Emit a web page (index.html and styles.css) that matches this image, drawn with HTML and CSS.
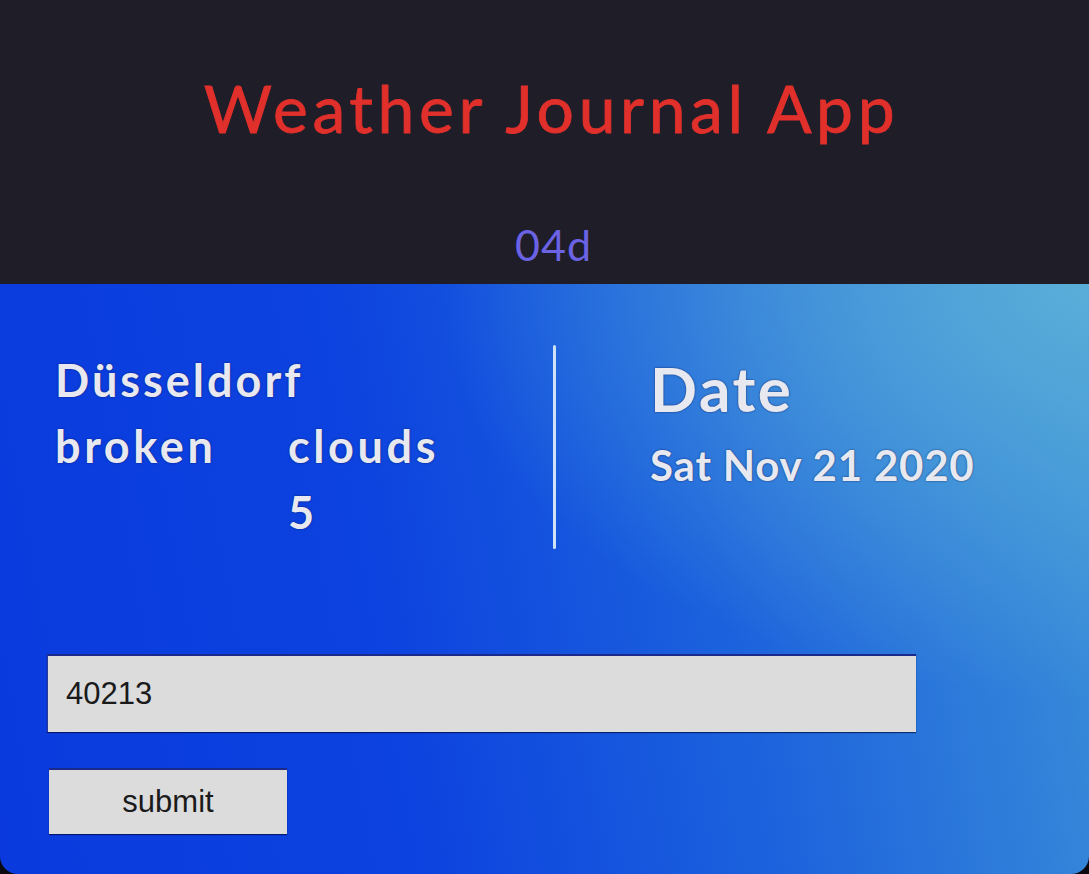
FILE: index.html
```html
<!DOCTYPE html>
<html lang="en">
<head>
<meta charset="utf-8">
<title>Weather Journal App</title>
<link rel="stylesheet" href="styles.css">
</head>
<body>
<div class="app">
  <header class="header">
    <h1 class="title">Weather Journal App</h1>
    <div class="icon-code">04d</div>
  </header>
  <main class="main">
    <section class="summary">
      <div class="weather">
        <div class="city">Düsseldorf</div>
        <div class="word">broken</div>
        <div class="word">clouds</div>
        <div class="word empty"></div>
        <div class="word">5</div>
      </div>
      <div class="divider"></div>
      <div class="date-box">
        <div class="date-label">Date</div>
        <div class="date-value">Sat Nov 21 2020</div>
      </div>
    </section>
    <form class="form">
      <input class="zip" type="text" value="40213">
      <button class="submit" type="button">submit</button>
    </form>
  </main>
</div>
</body>
</html>
```

FILE: styles.css
```css
html, body {
  margin: 0;
  padding: 0;
  background: #0b0a10;
}

.app {
  width: 1089px;
  height: 874px;
  display: flex;
  flex-direction: column;
  font-family: "Lato", "Open Sans", sans-serif;
}

.header {
  height: 284px;
  background: #1e1d28;
  display: flex;
  flex-direction: column;
  align-items: center;
  box-sizing: border-box;
  padding-top: 68px;
}

.title {
  margin: 0;
  font-size: 66px;
  font-weight: 400;
  line-height: 80px;
  color: #e1302b;
  letter-spacing: 4.6px;
  padding-left: 14px;
  -webkit-text-stroke: 0.8px #e1302b;
}

.icon-code {
  margin-top: 72px;
  font-size: 43px;
  line-height: 50px;
  color: #6b63e4;
  padding-left: 18px;
  letter-spacing: 1px;
}

.main {
  flex: 1;
  border-radius: 0 0 18px 18px;
  background:
    radial-gradient(ellipse 60% 70% at 100% 0%, rgba(90, 175, 216, 0.95), rgba(90, 175, 216, 0) 100%),
    linear-gradient(80deg, #0a3ade 0%, #0c42df 35%, #1c62dd 65%, #3b90d8 100%);
  padding: 61px 0 0 47px;
  box-sizing: border-box;
}

.summary {
  display: flex;
  height: 204px;
  padding-left: 8px;
  color: #e8e9f0;
  text-shadow: 0 0 2px rgba(10, 20, 70, 0.8);
  font-weight: 700;
}

.weather {
  width: 498px;
  display: grid;
  grid-template-columns: 233px auto;
  grid-auto-rows: 66px;
  font-size: 45px;
  letter-spacing: 3.6px;
  padding-top: 2px;
  align-content: start;
}

.city {
  grid-column: 1 / 3;
  line-height: 66px;
  letter-spacing: 3px;
}

.word {
  line-height: 66px;
}

.divider {
  width: 3px;
  background: #cde2f6;
  border-radius: 2px;
}

.date-box {
  padding-left: 94px;
  padding-top: 5px;
}

.date-label {
  font-size: 62px;
  line-height: 76px;
  letter-spacing: 2.5px;
}

.date-value {
  font-size: 42px;
  line-height: 56px;
  margin-top: 11px;
  letter-spacing: 0.8px;
}

.form {
  display: flex;
  flex-direction: column;
  align-items: flex-start;
  margin-top: 105px;
}

.zip {
  width: 869px;
  height: 78px;
  box-sizing: border-box;
  background: #dcdcdd;
  border: none;
  border-top: 2px solid #1b2a8a;
  border-left: 1px solid #2a3a9a;
  box-shadow: 0 1px 1px rgba(0, 0, 40, 0.6);
  padding: 0 0 0 18px;
  font-family: "Liberation Sans", Arial, sans-serif;
  font-size: 31px;
  color: #1a1a1a;
  outline: none;
}

.submit {
  margin-top: 36px;
  margin-left: 2px;
  width: 238px;
  height: 66px;
  box-sizing: border-box;
  background: #dcdcdd;
  border: none;
  border-top: 2px solid #1b2a8a;
  box-shadow: 0 1px 1px rgba(0, 0, 40, 0.6);
  font-family: "Liberation Sans", Arial, sans-serif;
  font-size: 31px;
  color: #1a1a1a;
  padding: 0;
}
```
